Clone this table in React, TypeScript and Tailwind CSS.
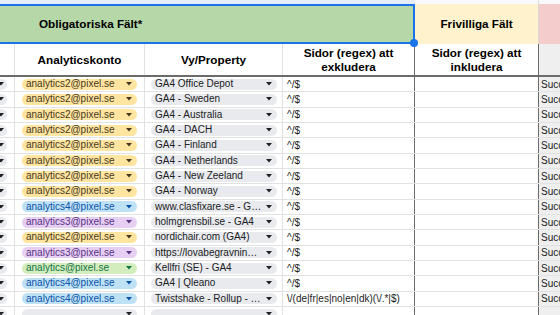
type ChipColor = "yellow" | "blue" | "purple" | "green" | "gray";

const chipStyles: Record<ChipColor, string> = {
  yellow: "bg-[#ffe5a0] text-[#473821]",
  blue: "bg-[#bfe1f6] text-[#0a53a8]",
  purple: "bg-[#e6cff2] text-[#5a3286]",
  green: "bg-[#d4edbc] text-[#11734b]",
  gray: "bg-[#e8eaed] text-[#202124]",
};

const accounts: Record<string, ChipColor> = {
  "analytics2@pixel.se": "yellow",
  "analytics4@pixel.se": "blue",
  "analytics3@pixel.se": "purple",
  "analytics@pixel.se": "green",
};

const rows: { account: string; view: string; exclude: string }[] = [
  { account: "analytics2@pixel.se", view: "GA4 Office Depot", exclude: "^/$" },
  { account: "analytics2@pixel.se", view: "GA4 - Sweden", exclude: "^/$" },
  { account: "analytics2@pixel.se", view: "GA4 - Australia", exclude: "^/$" },
  { account: "analytics2@pixel.se", view: "GA4 - DACH", exclude: "^/$" },
  { account: "analytics2@pixel.se", view: "GA4 - Finland", exclude: "^/$" },
  { account: "analytics2@pixel.se", view: "GA4 - Netherlands", exclude: "^/$" },
  { account: "analytics2@pixel.se", view: "GA4 - New Zeeland", exclude: "^/$" },
  { account: "analytics2@pixel.se", view: "GA4 - Norway", exclude: "^/$" },
  { account: "analytics4@pixel.se", view: "www.clasfixare.se - G…", exclude: "^/$" },
  { account: "analytics3@pixel.se", view: "holmgrensbil.se - GA4", exclude: "^/$" },
  { account: "analytics2@pixel.se", view: "nordichair.com (GA4)", exclude: "^/$" },
  { account: "analytics3@pixel.se", view: "https://lovabegravnin…", exclude: "^/$" },
  { account: "analytics@pixel.se", view: "Kellfri (SE) - GA4", exclude: "^/$" },
  { account: "analytics4@pixel.se", view: "GA4 | Qleano", exclude: "^/$" },
  { account: "analytics4@pixel.se", view: "Twistshake - Rollup - …", exclude: "\\/(de|fr|es|no|en|dk)(\\/.*|$)" },
];

const grid = "grid grid-cols-[15px_130px_138px_132px_124px_1fr]";

function Arrow() {
  return (
    <svg width="6" height="4" viewBox="0 0 6 4" className="shrink-0">
      <polygon points="0,0 6,0 3,3.5" fill="currentColor" />
    </svg>
  );
}

function Chip({ text, color }: { text: string; color: ChipColor }) {
  return (
    <div
      className={`flex h-[11px] flex-1 items-center justify-between rounded-full pl-[4px] pr-[5px] text-[10px] leading-none whitespace-nowrap ${chipStyles[color]}`}
    >
      <span>{text}</span>
      <Arrow />
    </div>
  );
}

function DataRow({ account, view, exclude }: { account?: string; view?: string; exclude?: string }) {
  return (
    <div className={`${grid} h-[15.33px] border-b border-[#e2e2e2]`}>
      <div className="flex items-center overflow-hidden border-r border-[#e2e2e2]">
        <div className="ml-[-10px] flex h-[11px] w-[17px] items-center justify-end rounded-full bg-[#e8eaed] pr-[3px] text-[#202124]">
          <Arrow />
        </div>
      </div>
      <div className="flex items-center border-r border-[#e2e2e2] pl-[7px] pr-[7px]">
        <Chip text={account ?? ""} color={account ? accounts[account] : "gray"} />
      </div>
      <div className="flex items-center border-r border-[#e2e2e2] pl-[6px] pr-[5px]">
        <Chip text={view ?? ""} color="gray" />
      </div>
      <div className="flex items-center overflow-hidden whitespace-nowrap border-r border-[#6b6b6b] pl-[4px] text-[10px] text-[#222]">
        {exclude}
      </div>
      <div className="border-r border-[#6b6b6b]" />
      <div className="flex items-center overflow-hidden whitespace-nowrap bg-[#efefef] pl-[2px] text-[10px] text-[#222]">
        {account ? "Success" : ""}
      </div>
    </div>
  );
}

export default function App() {
  return (
    <div className="h-[315px] w-[560px] overflow-hidden bg-white font-['Liberation_Sans',Arial,sans-serif] text-[#000]">
      {/* row above the header band */}
      <div className={`${grid} h-[4px]`}>
        <div className="col-span-4 bg-[#e6edf9]" />
        <div className="border-r border-[#d9d9d9] bg-[#f8f9fa]" />
        <div className="bg-[#f8f9fa]" />
      </div>

      {/* group band */}
      <div className={`${grid} h-[40px]`}>
        <div className="relative col-span-4 flex items-center border-y-2 border-r-2 border-[#1a73e8] bg-[#b6d7a8] pl-[39px] text-[11.7px] font-bold">
          Obligatoriska Fält*
          <div className="absolute bottom-[-5px] right-[-5px] h-[8px] w-[8px] rounded-full bg-[#1a73e8]" />
        </div>
        <div className="flex items-center justify-center border-r border-[#d9d9d9] bg-[#fff2cc] text-[11.7px] font-bold">
          Frivilliga Fält
        </div>
        <div className="bg-[#f4cccc]" />
      </div>

      {/* column headers */}
      <div className={`${grid} h-[33px] border-b-2 border-[#6b6b6b] text-center text-[11.7px] font-bold leading-[14px]`}>
        <div className="border-r border-[#e2e2e2]" />
        <div className="flex items-center justify-center border-r border-[#e2e2e2]">Analyticskonto</div>
        <div className="flex items-center justify-center border-r border-[#e2e2e2]">Vy/Property</div>
        <div className="flex items-center justify-center border-r border-[#6b6b6b]">
          Sidor (regex) att
          <br />
          exkludera
        </div>
        <div className="flex items-center justify-center border-r border-[#6b6b6b]">
          Sidor (regex) att
          <br />
          inkludera
        </div>
        <div className="bg-[#efefef]" />
      </div>

      {rows.map((r, i) => (
        <DataRow key={i} {...r} />
      ))}
      <DataRow />
    </div>
  );
}
